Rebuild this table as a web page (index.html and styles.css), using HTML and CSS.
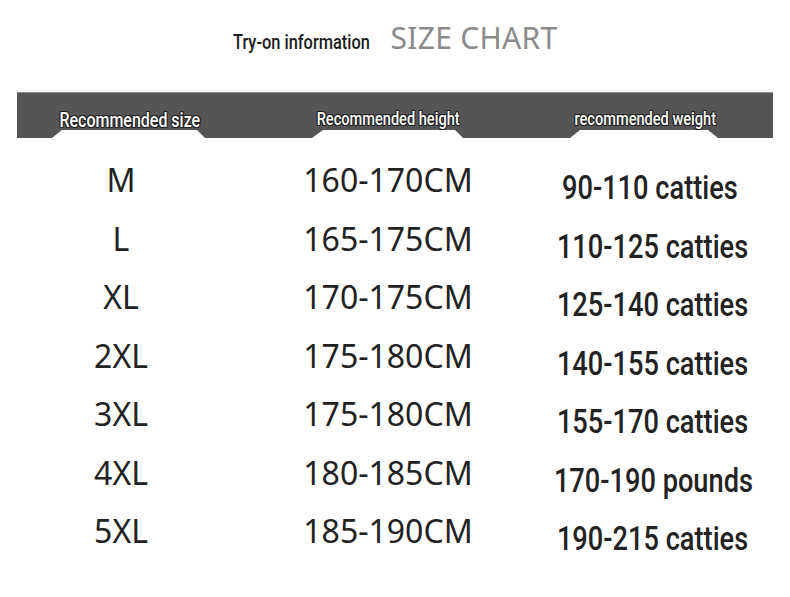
FILE: index.html
```html
<!DOCTYPE html>
<html>
<head>
<meta charset="utf-8">
<link rel="stylesheet" href="styles.css">
</head>
<body>
<div class="page">
  <div class="title">
    <span class="try"><span class="cond">Try-on information</span></span>
    <span class="chart">SIZE CHART</span>
  </div>
  <div class="band">
    <div class="hcell c1"><span class="label">Recommended size</span></div>
    <div class="hcell c2"><span class="label small">Recommended height</span></div>
    <div class="hcell c3"><span class="label small">recommended weight</span></div>
  </div>
  <div class="rows">
    <div class="row"><div class="size">M</div><div class="height">160-170CM</div><div class="weight first"><span class="w">90-110 catties</span></div></div>
    <div class="row"><div class="size">L</div><div class="height">165-175CM</div><div class="weight"><span class="w">110-125 catties</span></div></div>
    <div class="row"><div class="size">XL</div><div class="height">170-175CM</div><div class="weight"><span class="w">125-140 catties</span></div></div>
    <div class="row"><div class="size">2XL</div><div class="height">175-180CM</div><div class="weight"><span class="w">140-155 catties</span></div></div>
    <div class="row"><div class="size">3XL</div><div class="height">175-180CM</div><div class="weight"><span class="w">155-170 catties</span></div></div>
    <div class="row"><div class="size">4XL</div><div class="height">180-185CM</div><div class="weight"><span class="w">170-190 pounds</span></div></div>
    <div class="row"><div class="size">5XL</div><div class="height">185-190CM</div><div class="weight"><span class="w">190-215 catties</span></div></div>
  </div>
</div>
</body>
</html>
```
FILE: styles.css
```css
* { box-sizing: border-box; }
html, body { margin: 0; padding: 0; background: #fff; }
.page { width: 790px; height: 597px; overflow: hidden; padding-top: 17px; }

.title {
  display: flex;
  justify-content: center;
  align-items: baseline;
  gap: 22px;
  height: 43px;
  padding-left: 0;
}
.try { display: inline-block; width: 136px; white-space: nowrap; }
.cond {
  display: inline-block;
  font-family: Roboto, sans-serif;
  font-weight: 500;
  font-size: 20.5px;
  color: #1c1c1c;
  transform: scaleX(0.8);
  transform-origin: left bottom;
}
.chart {
  font-family: "Noto Sans", sans-serif;
  font-size: 30px;
  color: #8a8a8a;
  letter-spacing: 0.3px;
}

.band {
  margin: 32px 0 0 17px;
  width: 756px;
  height: 46px;
  background: #555;
  border-top: 1px solid #8a8a8a;
  display: grid;
  grid-template-columns: 216px 310px 214px 16px;
  clip-path: polygon(0 0, 756px 0, 756px 46px, 701px 46px, 691px 38px, 563px 38px, 553px 46px, 446px 46px, 438px 38px, 306px 38px, 295px 46px, 188px 46px, 180px 38px, 45px 38px, 35px 46px, 0 46px);
}
.hcell {
  display: flex;
  justify-content: center;
  align-items: flex-end;
  padding-bottom: 8px;
}
.c1 { padding-left: 9px; }
.c2 { padding-bottom: 10px; }
.c3 { padding-right: 10px; padding-bottom: 10px; }
.label {
  display: inline-block;
  white-space: nowrap;
  font-family: Roboto, sans-serif;
  font-weight: 500;
  font-size: 19.5px;
  line-height: 19px;
  color: #fff;
  transform: scaleX(0.82);
  text-shadow: 1px 0 0 #222, -1px 0 0 #222, 0 1px 0 #222, 0 -1px 0 #222, 1px 1px 0 #222, -1px -1px 0 #222, 1px -1px 0 #222, -1px 1px 0 #222;
}
.label.small { font-size: 17.8px; }

.rows { padding: 13px 0 0 17px; }
.row {
  display: grid;
  grid-template-columns: 216px 310px 214px;
  height: 58.5px;
  align-items: center;
}
.size, .height {
  font-family: "Noto Sans", sans-serif;
  font-size: 32px;
  color: #222;
  text-align: center;
  line-height: 40px;
}
.size { padding-right: 8px; }
.height { padding-right: 0; }
.weight {
  display: flex;
  justify-content: center;
  padding-top: 14px;
  padding-left: 6px;
}
.weight.first { padding-left: 0; }
.w {
  display: inline-block;
  white-space: nowrap;
  font-family: Roboto, sans-serif;
  font-weight: 500;
  font-size: 34px;
  line-height: 40px;
  color: #222;
  transform: scaleX(0.8);
}
```
